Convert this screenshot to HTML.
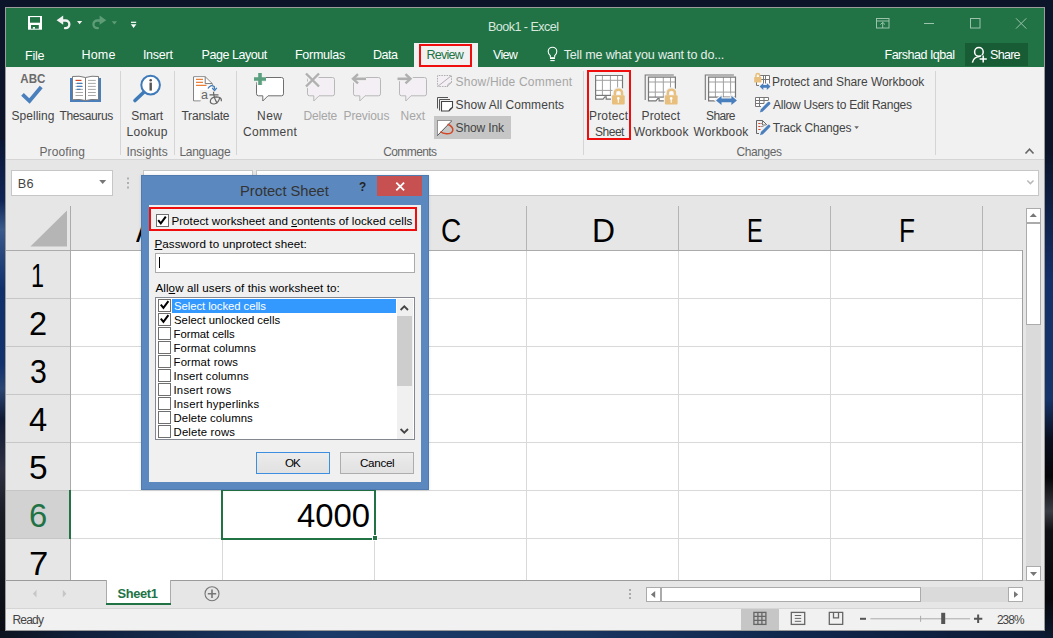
<!DOCTYPE html>
<html><head><meta charset="utf-8">
<style>
html,body{margin:0;padding:0;}
body{width:1053px;height:638px;overflow:hidden;position:relative;background:#0b1530;font-family:"Liberation Sans",sans-serif;}
.t{position:absolute;white-space:nowrap;}
.r{position:absolute;box-sizing:border-box;}
svg{position:absolute;overflow:visible;}
</style></head><body>
<div class="r" style="left:0px;top:0px;width:1053px;height:638px;background:#0b1428;"></div>
<div class="r" style="left:0px;top:140px;width:5px;height:498px;background:linear-gradient(180deg,#0b1636 0%,#0f2456 12%,#3a5a8c 18%,#2a4a80 22%,#10306c 30%,#12326e 45%,#2a4572 50%,#101a34 56%,#2e3040 66%,#1a1c26 75%,#0a0c14 100%);"></div>
<div class="r" style="left:0px;top:631px;width:1053px;height:7px;background:linear-gradient(90deg,#0d1420 0%,#10203c 8%,#1b3a68 30%,#183560 55%,#0f2448 80%,#0d1a34 100%);"></div>
<div class="r" style="left:1045px;top:150px;width:8px;height:488px;background:linear-gradient(180deg,#0b1428 0%,#14306a 27%,#16356a 51%,#0a1020 59%,#050608 67%,#3a3d44 74%,#101114 78%,#07080c 92%,#0d1a30 100%);"></div>
<div class="r" style="left:5px;top:7px;width:1040px;height:624px;background:#f1f1f1;border:1px solid #9c9c9c;"></div>
<div class="r" style="left:6px;top:8px;width:1038px;height:59px;background:#217346;"></div>
<div class="r" style="left:965px;top:43px;width:63px;height:23px;background:#185c35;"></div>
<div class="r" style="left:414px;top:43px;width:64px;height:24px;background:#f1f1f1;"></div>
<div class="r" style="left:419px;top:44px;width:53px;height:23px;border:2px solid #f00d0d;"></div>
<div class="r" style="left:6px;top:159px;width:1038px;height:1px;background:#d5d5d5;"></div>
<div class="r" style="left:6px;top:160px;width:1038px;height:420px;background:#e6e6e6;"></div>
<div class="r" style="left:11px;top:170px;width:102px;height:26px;background:#fff;border:1px solid #c6c6c6;"></div>
<div class="r" style="left:143px;top:170px;width:110px;height:26px;background:#fff;border:1px solid #c6c6c6;"></div>
<div class="r" style="left:256px;top:170px;width:783px;height:26px;background:#fff;border:1px solid #c6c6c6;"></div>
<div class="r" style="left:70px;top:250px;width:952px;height:330px;background:#fff;"></div>
<div class="r" style="left:1022px;top:250px;width:1px;height:330px;background:#a0a0a0;"></div>
<div class="r" style="left:6px;top:250px;width:1016px;height:1px;background:#ababab;"></div>
<div class="r" style="left:70px;top:206px;width:1px;height:374px;background:#ababab;"></div>
<div class="r" style="left:6px;top:580px;width:1038px;height:28px;background:#e6e6e6;border-top:1px solid #c6c6c6;"></div>
<div class="r" style="left:6px;top:608px;width:1038px;height:22px;background:#f1f1f1;border-top:1px solid #d5d5d5;"></div>
<div class="t" style="left:488.00px;top:21.00px;font-size:12.56px;line-height:12.56px;color:#d9e8de;letter-spacing:-0.533px;font-weight:400;">Book1 - Excel</div>
<div class="t" style="left:25.00px;top:50.00px;font-size:12.56px;line-height:12.56px;color:#ffffff;letter-spacing:-0.267px;font-weight:400;">File</div>
<div class="t" style="left:81.50px;top:49.00px;font-size:12.56px;line-height:12.56px;color:#ffffff;letter-spacing:0.133px;font-weight:400;">Home</div>
<div class="t" style="left:142.90px;top:49.00px;font-size:12.56px;line-height:12.56px;color:#ffffff;letter-spacing:-0.260px;font-weight:400;">Insert</div>
<div class="t" style="left:201.50px;top:49.00px;font-size:12.56px;line-height:12.56px;color:#ffffff;letter-spacing:-0.470px;font-weight:400;">Page Layout</div>
<div class="t" style="left:295.00px;top:49.00px;font-size:12.56px;line-height:12.56px;color:#ffffff;letter-spacing:-0.300px;font-weight:400;">Formulas</div>
<div class="t" style="left:373.00px;top:49.00px;font-size:12.56px;line-height:12.56px;color:#ffffff;letter-spacing:-0.533px;font-weight:400;">Data</div>
<div class="t" style="left:426.60px;top:49.00px;font-size:12.56px;line-height:12.56px;color:#217346;letter-spacing:-0.780px;font-weight:400;">Review</div>
<div class="t" style="left:493.00px;top:49.00px;font-size:12.56px;line-height:12.56px;color:#ffffff;letter-spacing:-0.700px;font-weight:400;">View</div>
<div class="t" style="left:563.70px;top:49.00px;font-size:12.56px;line-height:12.56px;color:#e6efe9;letter-spacing:-0.159px;font-weight:400;">Tell me what you want to do...</div>
<div class="t" style="left:884.50px;top:49.00px;font-size:12.56px;line-height:12.56px;color:#ffffff;letter-spacing:-0.517px;font-weight:400;">Farshad Iqbal</div>
<div class="t" style="left:990.10px;top:49.00px;font-size:12.56px;line-height:12.56px;color:#ffffff;letter-spacing:-0.750px;font-weight:400;">Share</div>
<svg style="left:0;top:0" width="1053" height="70">
<rect x="28" y="16" width="14" height="13.7" fill="#fff"/>
<rect x="30" y="17.1" width="10" height="5.6" fill="#217346"/>
<rect x="31" y="25" width="7.8" height="3.7" fill="#217346"/>
<rect x="32.9" y="27.1" width="2.1" height="1.6" fill="#fff"/>
<path d="M56.6 20.2 L63.2 15.6 V24.8 Z" fill="#f2f2f2"/>
<path d="M62 20.5 H65.5 A3.85 3.85 0 0 1 65.5 28.2 H65" fill="none" stroke="#f2f2f2" stroke-width="2.3" stroke-linecap="round"/>
<path d="M77 21 h5.2 l-2.6 3.2z" fill="#f2f2f2"/>
<path d="M106.2 20.2 L99.6 15.6 V24.8 Z" fill="#5e9d77"/>
<path d="M100.8 20.5 H97.3 A3.85 3.85 0 0 0 97.3 28.2 H97.8" fill="none" stroke="#5e9d77" stroke-width="2.3" stroke-linecap="round"/>
<path d="M111.8 21.2 h5.2 l-2.6 3.2z" fill="#5e9d77"/>
<path d="M131 22.3 h5.2" stroke="#fff" stroke-width="1.2"/>
<path d="M130.8 24.2 h5.6 l-2.8 3.8z" fill="#fff"/>
<g fill="none" stroke="#9cc3ac" stroke-width="1">
<rect x="876.5" y="18.5" width="12.5" height="9.5"/>
<path d="M876.5 21 h12.5"/>
<path d="M882.7 28 v-5.5 M880.4 24.6 l2.3 -2.3 l2.3 2.3"/>
<path d="M924 23.5 h10"/>
<rect x="970.5" y="18.5" width="9.5" height="9.5"/>
<path d="M1016 18.3 l10.3 10.3 M1026.3 18.3 l-10.3 10.3"/>
</g>
<g fill="none" stroke="#fff" stroke-width="1.5">
<circle cx="978.9" cy="51.9" r="4.3"/>
<path d="M972.4 62.6 c0.8 -3.8 4 -6 8.2 -6"/>
</g>
<path d="M983.2 55.2 v7.6 M979.4 59 h7.6" stroke="#185c35" stroke-width="4"/>
<path d="M983.2 55.4 v7.2 M979.6 59 h7.2" stroke="#fff" stroke-width="1.5"/>
<path d="M550.3 57.3 V55.6 Q548.2 53.8 548.2 51.5 A4.3 4.3 0 0 1 556.8 51.5 Q556.8 53.8 554.7 55.6 V57.3" fill="none" stroke="#fff" stroke-width="1.1"/>
<rect x="550" y="57.2" width="5" height="1.8" fill="#fff"/>
<path d="M550.3 60.6 h4.4" stroke="#fff" stroke-width="1.1"/>
</svg>
<div class="t" style="left:11.50px;top:110.00px;font-size:12.00px;line-height:12.00px;color:#444444;letter-spacing:0.029px;font-weight:400;">Spelling</div>
<div class="t" style="left:59.60px;top:110.00px;font-size:12.00px;line-height:12.00px;color:#444444;letter-spacing:-0.387px;font-weight:400;">Thesaurus</div>
<div class="t" style="left:131.30px;top:110.00px;font-size:12.00px;line-height:12.00px;color:#444444;letter-spacing:-0.075px;font-weight:400;">Smart</div>
<div class="t" style="left:126.50px;top:126.00px;font-size:12.00px;line-height:12.00px;color:#444444;letter-spacing:0.320px;font-weight:400;">Lookup</div>
<div class="t" style="left:181.40px;top:110.00px;font-size:12.00px;line-height:12.00px;color:#444444;letter-spacing:-0.188px;font-weight:400;">Translate</div>
<div class="t" style="left:257.00px;top:110.00px;font-size:12.00px;line-height:12.00px;color:#444444;letter-spacing:0.500px;font-weight:400;">New</div>
<div class="t" style="left:243.10px;top:126.00px;font-size:12.00px;line-height:12.00px;color:#444444;letter-spacing:0.267px;font-weight:400;">Comment</div>
<div class="t" style="left:303.50px;top:110.00px;font-size:12.00px;line-height:12.00px;color:#a6a6a6;letter-spacing:-0.200px;font-weight:400;">Delete</div>
<div class="t" style="left:343.50px;top:110.00px;font-size:12.00px;line-height:12.00px;color:#a6a6a6;letter-spacing:-0.114px;font-weight:400;">Previous</div>
<div class="t" style="left:400.60px;top:110.00px;font-size:12.00px;line-height:12.00px;color:#a6a6a6;letter-spacing:-0.067px;font-weight:400;">Next</div>
<div class="t" style="left:455.60px;top:76.00px;font-size:12.00px;line-height:12.00px;color:#a6a6a6;letter-spacing:0.200px;font-weight:400;">Show/Hide Comment</div>
<div class="t" style="left:455.60px;top:99.00px;font-size:12.00px;line-height:12.00px;color:#444444;letter-spacing:0.069px;font-weight:400;">Show All Comments</div>
<div class="r" style="left:434px;top:116px;width:77px;height:23px;background:#c6c6c6;"></div>
<div class="t" style="left:455.60px;top:122.00px;font-size:12.00px;line-height:12.00px;color:#444444;letter-spacing:-0.143px;font-weight:400;">Show Ink</div>
<div class="t" style="left:589.00px;top:110.00px;font-size:12.00px;line-height:12.00px;color:#444444;letter-spacing:0.167px;font-weight:400;">Protect</div>
<div class="t" style="left:594.90px;top:126.00px;font-size:12.00px;line-height:12.00px;color:#444444;letter-spacing:-0.450px;font-weight:400;">Sheet</div>
<div class="t" style="left:641.60px;top:110.00px;font-size:12.00px;line-height:12.00px;color:#444444;letter-spacing:0.067px;font-weight:400;">Protect</div>
<div class="t" style="left:633.70px;top:126.00px;font-size:12.00px;line-height:12.00px;color:#444444;letter-spacing:0.129px;font-weight:400;">Workbook</div>
<div class="t" style="left:706.00px;top:110.00px;font-size:12.00px;line-height:12.00px;color:#444444;letter-spacing:-0.625px;font-weight:400;">Share</div>
<div class="t" style="left:693.50px;top:126.00px;font-size:12.00px;line-height:12.00px;color:#444444;letter-spacing:0.129px;font-weight:400;">Workbook</div>
<div class="t" style="left:772.00px;top:76.00px;font-size:12.00px;line-height:12.00px;color:#444444;letter-spacing:-0.064px;font-weight:400;">Protect and Share Workbook</div>
<div class="t" style="left:773.00px;top:99.00px;font-size:12.00px;line-height:12.00px;color:#444444;letter-spacing:-0.256px;font-weight:400;">Allow Users to Edit Ranges</div>
<div class="t" style="left:772.80px;top:122.00px;font-size:12.00px;line-height:12.00px;color:#444444;letter-spacing:-0.192px;font-weight:400;">Track Changes</div>
<div class="t" style="left:39.50px;top:146.00px;font-size:11.98px;line-height:11.98px;color:#666666;letter-spacing:0.129px;font-weight:400;">Proofing</div>
<div class="t" style="left:126.40px;top:146.00px;font-size:11.98px;line-height:11.98px;color:#666666;letter-spacing:0.000px;font-weight:400;">Insights</div>
<div class="t" style="left:179.40px;top:146.00px;font-size:11.98px;line-height:11.98px;color:#666666;letter-spacing:-0.286px;font-weight:400;">Language</div>
<div class="t" style="left:383.20px;top:146.00px;font-size:11.98px;line-height:11.98px;color:#666666;letter-spacing:-0.571px;font-weight:400;">Comments</div>
<div class="t" style="left:736.40px;top:146.00px;font-size:11.98px;line-height:11.98px;color:#666666;letter-spacing:-0.383px;font-weight:400;">Changes</div>
<div class="r" style="left:120px;top:71px;width:1px;height:84px;background:#d5d5d5;"></div>
<div class="r" style="left:174px;top:71px;width:1px;height:84px;background:#d5d5d5;"></div>
<div class="r" style="left:236px;top:71px;width:1px;height:84px;background:#d5d5d5;"></div>
<div class="r" style="left:583px;top:71px;width:1px;height:84px;background:#d5d5d5;"></div>
<div class="r" style="left:935px;top:71px;width:1px;height:84px;background:#d5d5d5;"></div>
<div class="r" style="left:587px;top:70px;width:44px;height:70px;border:2px solid #f00d0d;"></div>
<svg style="left:0;top:0" width="1053" height="160">
<text x="20.3" y="82.8" font-family="Liberation Sans" font-weight="700" font-size="12.6" fill="#6a6a6a" textLength="25" lengthAdjust="spacingAndGlyphs">ABC</text>
<path d="M22.5 94.3 L29.5 101 L41.2 87" fill="none" stroke="#4a7fbd" stroke-width="3.8" stroke-linecap="butt"/>
<rect x="70" y="78" width="31" height="24" fill="#4a7fbd"/>
<path d="M72.5 76.5 Q79 75.5 85.5 77.5 Q92 75.5 98.5 76.5 V99.8 Q92 98.8 85.5 100.5 Q79 98.8 72.5 99.8 Z" fill="#fff" stroke="#7a7a7a" stroke-width="1"/>
<path d="M85.5 77.5 V100.5" stroke="#7a7a7a" stroke-width="1"/>
<g stroke="#a8a8a8" stroke-width="1">
<path d="M75.5 83.4h7.5M75.5 86.4h7.5M75.5 89.4h7.5M75.5 92.5h7.5M75.5 95.5h7.5"/>
<path d="M88 80.4h7.8M88 83.4h7.8M88 86.4h7.8M88 89.4h7.8M88 92.5h7.8M88 95.5h7.8"/>
</g>
<path d="M75.5 80.4h6" stroke="#d24726" stroke-width="1.2"/>
<path d="M77 83.4h5M77 86.4h5M77 89.4h3.5" stroke="#4a7fbd" stroke-width="1.2"/>
<circle cx="150.6" cy="85.1" r="9.3" fill="#fff" stroke="#3f7ab9" stroke-width="2"/>
<path d="M135 100.5 L143.8 92.2" stroke="#3f7ab9" stroke-width="3.6" stroke-linecap="round"/>
<circle cx="150.7" cy="80.2" r="1.3" fill="#555"/>
<rect x="149.5" y="82.6" width="2.4" height="8" fill="#555"/>
<path d="M193.6 76.8 H205.2 L212.2 83.6 V85 M193.6 76.8 V100.8 H200.5" fill="#fff" stroke="#777" stroke-width="1"/>
<path d="M194.1 77.3 H205 L211.7 83.8 V90 H200 V100.3 H194.1 Z" fill="#fff"/>
<path d="M205.2 76.8 V83.6 H212.2" fill="none" stroke="#777" stroke-width="1"/>
<path d="M196 79.4h7M196 82.4h7M196 85.4h10.5" stroke="#e8803a" stroke-width="1.2"/>
<path d="M208 88.5 Q210.5 84.2 214.2 86.5 L214.6 89.5" fill="none" stroke="#3f7ab9" stroke-width="1.3"/>
<path d="M212.2 88 l2.4 2.6 l2.2 -2.8" fill="none" stroke="#3f7ab9" stroke-width="1.2"/>
<text x="201" y="98.8" font-family="Liberation Sans" font-size="12.5" fill="#666">a</text>
<path d="M209.5 94.8 h9 M213.5 91.8 q0.2 6.5 3.8 11.5 M219.8 97.2 q-1.2 6.3 -5.5 6.8 q-4.2 0.2 -4 -3 q0.6 -4.2 6.5 -4.2 q5 0.2 4.6 4.5" fill="none" stroke="#666" stroke-width="1.2"/>
<!-- New comment -->
<path d="M258.5 77.5 H281.5 Q283.5 77.5 283.5 79.5 V93.8 Q283.5 95.8 281.5 95.8 H268 L262.8 101 V95.8 H258.5 Q256.5 95.8 256.5 93.8 V79.5 Q256.5 77.5 258.5 77.5 Z" fill="#fff" stroke="#6f6f6f" stroke-width="1"/>
<path d="M260 73 V85 M254 79 H266" stroke="#f1f1f1" stroke-width="6.5"/><path d="M260 73 V85 M254 79 H266" stroke="#5aa07f" stroke-width="3.6"/>
<!-- Delete -->
<path d="M309.5 77.5 H332.5 Q334.5 77.5 334.5 79.5 V93.8 Q334.5 95.8 332.5 95.8 H319 L313.8 101 V95.8 H309.5 Q307.5 95.8 307.5 93.8 V79.5 Q307.5 77.5 309.5 77.5 Z" fill="#f4eff5" stroke="#b8b8b8" stroke-width="1"/>
<path d="M306 73.5 L319 86.5 M319 73.5 L306 86.5" stroke="#f1f1f1" stroke-width="5"/><path d="M306 73.5 L319 86.5 M319 73.5 L306 86.5" stroke="#b0b0b0" stroke-width="2.4"/>
<!-- Previous -->
<path d="M355.5 77.5 H378.5 Q380.5 77.5 380.5 79.5 V93.8 Q380.5 95.8 378.5 95.8 H365 L359.8 101 V95.8 H355.5 Q353.5 95.8 353.5 93.8 V79.5 Q353.5 77.5 355.5 77.5 Z" fill="#f4eff5" stroke="#b8b8b8" stroke-width="1"/>
<path d="M353.5 78.8 H366 M358 74.2 L353 78.8 L358 83.4" fill="none" stroke="#f1f1f1" stroke-width="5"/><path d="M353.5 78.8 H366" stroke="#b0b0b0" stroke-width="2.6"/>
<path d="M358 74.2 L353 78.8 L358 83.4" fill="none" stroke="#b0b0b0" stroke-width="2.4"/>
<!-- Next -->
<path d="M401.5 77.5 H424.5 Q426.5 77.5 426.5 79.5 V93.8 Q426.5 95.8 424.5 95.8 H411 L405.8 101 V95.8 H401.5 Q399.5 95.8 399.5 93.8 V79.5 Q399.5 77.5 401.5 77.5 Z" fill="#f4eff5" stroke="#b8b8b8" stroke-width="1"/>
<path d="M397.5 78.8 H410 M405.5 74.2 L410.5 78.8 L405.5 83.4" fill="none" stroke="#f1f1f1" stroke-width="5"/><path d="M397.5 78.8 H410" stroke="#b0b0b0" stroke-width="2.6"/>
<path d="M405.5 74.2 L410.5 78.8 L405.5 83.4" fill="none" stroke="#b0b0b0" stroke-width="2.4"/>
<!-- show/hide comment -->
<path d="M437.5 75.5 H451.5 V82.5 L447 87 H437.5 Z" fill="#f4eff5"/>
<path d="M451.5 82.5 V75.5 H437.5 V86.5 H447" fill="none" stroke="#b0b0b0" stroke-width="1" stroke-dasharray="1.6 1"/>
<path d="M447 87 Q447.5 83 451.5 82.5 Q448.5 84.5 447 87 Z" fill="#fff" stroke="#b0b0b0" stroke-width="0.9"/>
<path d="M438 86.2 L451 76" stroke="#b0b0b0" stroke-width="1"/>
<!-- show all comments -->
<path d="M437.5 108.5 V97.5 H448 M439.5 110.5 V99.5 H450" fill="none" stroke="#555" stroke-width="1"/>
<path d="M441.5 101.5 H452.5 V107.5 L449 111 H441.5 Z" fill="#fff" stroke="#444" stroke-width="1.1"/>
<path d="M449 111 Q449.3 108 452.5 107.5" fill="none" stroke="#444" stroke-width="0.9"/>
<!-- show ink -->
<path d="M437.5 135.5 V120.5 H452 Z" fill="#fff"/>
<path d="M437.5 135.5 V120.5 H452" fill="none" stroke="#444" stroke-width="1" stroke-dasharray="1 1"/>
<path d="M437.6 135.4 L451.6 121" stroke="#555" stroke-width="1"/>
<path d="M447.6 124.2 Q453.2 126.5 452.8 130.3 Q452 134 446.5 133.8 Q442.5 133.6 440.6 131.6" fill="none" stroke="#d24726" stroke-width="1.5"/>
<!-- protect sheet -->
<g transform="translate(0 0)"><rect x="595.6" y="75.5" width="27" height="23.5" fill="#fff"/>
<path d="M595.6 80.3 H622.5 M595.6 90.4 H612.5 M602.4 75.5 V95.4 M610.4 75.5 V95.4 M617.6 75.5 V88.5" fill="none" stroke="#a0a0a0" stroke-width="1"/>
<path d="M595.6 95.4 V75.5 H622.5 V88.5" fill="none" stroke="#777" stroke-width="1.2"/>
<path d="M595.6 95.4 H611" fill="none" stroke="#777" stroke-width="1.2"/>
<path d="M595.6 95.4 V99.2 H603 L605 96.8 H606.2 V99.2 H611" fill="none" stroke="#777" stroke-width="1.2"/>
</g><g transform="translate(0 0)"><path d="M614.9 95.5 V93 Q614.9 89.6 618.5 89.6 Q622.1 89.6 622.1 93 V95.5" fill="none" stroke="#f1f1f1" stroke-width="4.5"/>
<rect x="611" y="94.2" width="14.7" height="11.3" rx="1.5" fill="#f1f1f1"/>
<path d="M614.9 95.5 V93 Q614.9 89.6 618.5 89.6 Q622.1 89.6 622.1 93 V95.5" fill="none" stroke="#e8bf7c" stroke-width="2.3"/>
<rect x="612" y="95.2" width="12.7" height="9.3" rx="1" fill="#e8bf7c"/>
<circle cx="618.3" cy="98.4" r="1.3" fill="#fff"/>
<path d="M618.3 98.4 V102.8" stroke="#fff" stroke-width="1.1"/>
</g>
<!-- protect workbook -->
<path d="M645.2 99.9 V75 H673.8" fill="none" stroke="#777" stroke-width="1.1"/><g transform="translate(52.9 1.7)"><rect x="595.6" y="75.5" width="27" height="23.5" fill="#fff"/>
<path d="M595.6 80.3 H622.5 M595.6 90.4 H612.5 M602.4 75.5 V95.4 M610.4 75.5 V95.4 M617.6 75.5 V88.5" fill="none" stroke="#a0a0a0" stroke-width="1"/>
<path d="M595.6 95.4 V75.5 H622.5 V88.5" fill="none" stroke="#777" stroke-width="1.2"/>
<path d="M595.6 95.4 H611" fill="none" stroke="#777" stroke-width="1.2"/>
<path d="M595.6 95.4 V99.2 H603 L605 96.8 H606.2 V99.2 H611" fill="none" stroke="#777" stroke-width="1.2"/>
</g><g transform="translate(52.9 0)"><path d="M614.9 95.5 V93 Q614.9 89.6 618.5 89.6 Q622.1 89.6 622.1 93 V95.5" fill="none" stroke="#f1f1f1" stroke-width="4.5"/>
<rect x="611" y="94.2" width="14.7" height="11.3" rx="1.5" fill="#f1f1f1"/>
<path d="M614.9 95.5 V93 Q614.9 89.6 618.5 89.6 Q622.1 89.6 622.1 93 V95.5" fill="none" stroke="#e8bf7c" stroke-width="2.3"/>
<rect x="612" y="95.2" width="12.7" height="9.3" rx="1" fill="#e8bf7c"/>
<circle cx="618.3" cy="98.4" r="1.3" fill="#fff"/>
<path d="M618.3 98.4 V102.8" stroke="#fff" stroke-width="1.1"/>
</g>
<!-- share workbook -->
<path d="M705.3000000000001 99.9 V75 H733.9" fill="none" stroke="#777" stroke-width="1.1"/>
<g transform="translate(113 1.7)">
<rect x="595.6" y="75.5" width="27" height="23.5" fill="#fff"/>
<path d="M595.6 80.3 H622.5 M595.6 90.4 H622.5 M602.4 75.5 V95.4 M610.4 75.5 V95.4 M617.6 75.5 V95.4" fill="none" stroke="#a0a0a0" stroke-width="1"/>
<path d="M595.6 95.4 V75.5 H622.5 V99.2 H611 M595.6 95.4 H622.5" fill="none" stroke="#777" stroke-width="1.2"/>
<path d="M595.6 95.4 V99.2 H603 L605 96.8 H606.2 V99.2 H611" fill="none" stroke="#777" stroke-width="1.2"/>
</g>
<path d="M716 100.4 L721.5 95.7 V98.6 H731.4 V95.7 L736.9 100.4 L731.4 105.1 V102.2 H721.5 V105.1 Z" fill="#f1f1f1" stroke="#f1f1f1" stroke-width="2.5"/>
<path d="M716 100.4 L721.5 95.7 V98.6 H731.4 V95.7 L736.9 100.4 L731.4 105.1 V102.2 H721.5 V105.1 Z" fill="#4a7fbd"/>
<!-- small change icons -->
<rect x="757" y="75.5" width="13" height="8.5" fill="#fff"/>
<g fill="none" stroke="#777" stroke-width="1">
<path d="M759 75.5 H769.5 V83.5 M759 79.5 H769.5 M763.5 75.5 V83.5 M765.5 75.5 V83.5 M756.5 81 V85.5 H759"/>
</g>
<path d="M755.9 77.5 V76 Q755.9 73.4 757.8 73.4 Q759.7 73.4 759.7 76 V77.5" fill="none" stroke="#e8bf7c" stroke-width="1.5"/>
<rect x="754.2" y="77" width="7.2" height="5.5" rx="0.6" fill="#e8bf7c"/>
<path d="M759.6 86.4 L763.3 82.9 V85 H766.8 V82.9 L770.5 86.4 L766.8 89.9 V87.8 H763.3 V89.9 Z" fill="#4a7fbd"/>
<rect x="755.5" y="97.5" width="13" height="9" fill="#fff"/>
<g fill="none" stroke="#777" stroke-width="1">
<path d="M755.5 106.5 V97.5 H768.5 V101 M755.5 100.5 H768.5 M755.5 103.5 H764 M755.5 106.5 H761 M759.5 97.5 V106.5 M764 97.5 V103.5"/>
</g>
<path d="M762.2 110 L769.2 103" stroke="#f1f1f1" stroke-width="5" stroke-linecap="round"/>
<path d="M762.2 110 L768.8 103.4" stroke="#4a7fbd" stroke-width="3" stroke-linecap="round"/>
<path d="M759.8 112.6 L761 109.3 L763 111.3 Z" fill="#4a7fbd"/>
<path d="M756.5 133.5 V120.5 H762.5 L767 125 V127" fill="none" stroke="#666" stroke-width="1"/>
<path d="M762.5 120.5 V125 H767" fill="none" stroke="#666" stroke-width="0.9"/>
<path d="M756.5 133.5 H759" fill="none" stroke="#666" stroke-width="1"/>
<path d="M758.3 123.5h2.2M758.3 126.5h2.2M758.3 129.5h2.2" stroke="#d24726" stroke-width="1.1"/>
<path d="M761 123.5h1.5M761 126.5h2.5" stroke="#999" stroke-width="1"/>
<path d="M762.4 132.6 L769.2 125.8" stroke="#f1f1f1" stroke-width="5" stroke-linecap="round"/>
<path d="M762.4 132.6 L768.8 126.2" stroke="#4a7fbd" stroke-width="3" stroke-linecap="round"/>
<path d="M759.9 135.2 L761.1 131.9 L763.1 133.9 Z" fill="#4a7fbd"/>
<path d="M854.3 126.2 h4.6 l-2.3 2.8z" fill="#666"/>
<path d="M1025.5 153.5 L1029.5 149.2 L1033.5 153.5" fill="none" stroke="#666" stroke-width="1.6"/>
</svg>
<div class="t" style="left:17.70px;top:178.00px;font-size:12.70px;line-height:12.70px;color:#444;letter-spacing:0.300px;font-weight:400;">B6</div>
<svg style="left:0;top:0" width="1053" height="260">
<path d="M99.2 180 h7 l-3.5 4z" fill="#777"/>
<rect x="127" y="177.5" width="2" height="2" fill="#b0b0b0"/>
<rect x="127" y="182" width="2" height="2" fill="#b0b0b0"/>
<rect x="127" y="186.5" width="2" height="2" fill="#b0b0b0"/>
<path d="M1027.3 180.5 l3.1 3.1 l3.1 -3.1" fill="none" stroke="#b8b8b8" stroke-width="1.5"/>
<path d="M30.4 246.4 H67 V210.4 Z" fill="#b5b5b5"/>
</svg>
<div class="r" style="left:71px;top:298px;width:951px;height:1px;background:#d9d9d9;"></div>
<div class="r" style="left:6px;top:298px;width:64px;height:1px;background:#c6c6c6;"></div>
<div class="r" style="left:71px;top:346px;width:951px;height:1px;background:#d9d9d9;"></div>
<div class="r" style="left:6px;top:346px;width:64px;height:1px;background:#c6c6c6;"></div>
<div class="r" style="left:71px;top:394px;width:951px;height:1px;background:#d9d9d9;"></div>
<div class="r" style="left:6px;top:394px;width:64px;height:1px;background:#c6c6c6;"></div>
<div class="r" style="left:71px;top:442px;width:951px;height:1px;background:#d9d9d9;"></div>
<div class="r" style="left:6px;top:442px;width:64px;height:1px;background:#c6c6c6;"></div>
<div class="r" style="left:71px;top:490px;width:951px;height:1px;background:#d9d9d9;"></div>
<div class="r" style="left:6px;top:490px;width:64px;height:1px;background:#c6c6c6;"></div>
<div class="r" style="left:71px;top:538px;width:951px;height:1px;background:#d9d9d9;"></div>
<div class="r" style="left:6px;top:538px;width:64px;height:1px;background:#c6c6c6;"></div>
<div class="r" style="left:222px;top:251px;width:1px;height:329px;background:#d9d9d9;"></div>
<div class="r" style="left:222px;top:206px;width:1px;height:44px;background:#b4b4b4;"></div>
<div class="r" style="left:374px;top:251px;width:1px;height:329px;background:#d9d9d9;"></div>
<div class="r" style="left:374px;top:206px;width:1px;height:44px;background:#b4b4b4;"></div>
<div class="r" style="left:526px;top:251px;width:1px;height:329px;background:#d9d9d9;"></div>
<div class="r" style="left:526px;top:206px;width:1px;height:44px;background:#b4b4b4;"></div>
<div class="r" style="left:678px;top:251px;width:1px;height:329px;background:#d9d9d9;"></div>
<div class="r" style="left:678px;top:206px;width:1px;height:44px;background:#b4b4b4;"></div>
<div class="r" style="left:830px;top:251px;width:1px;height:329px;background:#d9d9d9;"></div>
<div class="r" style="left:830px;top:206px;width:1px;height:44px;background:#b4b4b4;"></div>
<div class="r" style="left:982px;top:206px;width:1px;height:44px;background:#b4b4b4;"></div>
<div class="r" style="left:982px;top:251px;width:1px;height:329px;background:#d9d9d9;"></div>
<div class="r" style="left:6px;top:580px;width:1017px;height:1px;background:#9b9b9b;"></div>
<div class="r" style="left:6px;top:491px;width:64px;height:47px;background:#d2d2d2;"></div>
<div class="t" style="left:30.90px;top:259.00px;font-size:33.87px;line-height:33.87px;color:#000;letter-spacing:0.000px;font-weight:400;transform:scaleX(0.6918);transform-origin:0 0;">1</div>
<div class="t" style="left:29.47px;top:307.00px;font-size:33.87px;line-height:33.87px;color:#000;letter-spacing:0.000px;font-weight:400;transform:scaleX(0.9613);transform-origin:0 0;">2</div>
<div class="t" style="left:30.14px;top:355.00px;font-size:33.87px;line-height:33.87px;color:#000;letter-spacing:0.000px;font-weight:400;transform:scaleX(0.8944);transform-origin:0 0;">3</div>
<div class="t" style="left:28.83px;top:403.00px;font-size:33.87px;line-height:33.87px;color:#000;letter-spacing:0.000px;font-weight:400;transform:scaleX(0.9649);transform-origin:0 0;">4</div>
<div class="t" style="left:29.02px;top:451.00px;font-size:33.87px;line-height:33.87px;color:#000;letter-spacing:0.000px;font-weight:400;transform:scaleX(0.9876);transform-origin:0 0;">5</div>
<div class="t" style="left:29.45px;top:499.00px;font-size:33.87px;line-height:33.87px;color:#217346;letter-spacing:0.000px;font-weight:400;transform:scaleX(0.9682);transform-origin:0 0;">6</div>
<div class="t" style="left:28.66px;top:547.00px;font-size:33.87px;line-height:33.87px;color:#000;letter-spacing:0.000px;font-weight:400;transform:scaleX(1.0258);transform-origin:0 0;">7</div>
<div class="t" style="left:136.22px;top:214.00px;font-size:33.72px;line-height:33.72px;color:#000;letter-spacing:0.000px;font-weight:400;transform:scaleX(0.8296);transform-origin:0 0;">A</div>
<div class="t" style="left:287.60px;top:214.00px;font-size:33.72px;line-height:33.72px;color:#000;letter-spacing:0.000px;font-weight:400;transform:scaleX(0.8889);transform-origin:0 0;">B</div>
<div class="t" style="left:440.89px;top:214.00px;font-size:33.72px;line-height:33.72px;color:#000;letter-spacing:0.000px;font-weight:400;transform:scaleX(0.8310);transform-origin:0 0;">C</div>
<div class="t" style="left:591.75px;top:214.00px;font-size:33.72px;line-height:33.72px;color:#000;letter-spacing:0.000px;font-weight:400;transform:scaleX(0.9453);transform-origin:0 0;">D</div>
<div class="t" style="left:747.11px;top:214.00px;font-size:33.72px;line-height:33.72px;color:#000;letter-spacing:0.000px;font-weight:400;transform:scaleX(0.7011);transform-origin:0 0;">E</div>
<div class="t" style="left:898.90px;top:214.00px;font-size:33.72px;line-height:33.72px;color:#000;letter-spacing:0.000px;font-weight:400;transform:scaleX(0.7771);transform-origin:0 0;">F</div>
<div class="r" style="left:221px;top:489px;width:155px;height:51px;border:2px solid #217346;"></div>
<div class="r" style="left:372px;top:535px;width:6px;height:6px;background:#217346;border:1px solid #fff;"></div>
<div class="r" style="left:69px;top:490px;width:2px;height:49px;background:#217346;"></div>
<div class="t" style="left:296.91px;top:499.00px;font-size:33.14px;line-height:33.14px;color:#000;letter-spacing:0.000px;font-weight:400;transform:scaleX(0.9916);transform-origin:0 0;">4000</div>
<div class="r" style="left:1026px;top:208px;width:15px;height:372px;background:#dadada;"></div>
<div class="r" style="left:1026px;top:208px;width:15px;height:15px;background:#fff;border:1px solid #ababab;"></div>
<div class="r" style="left:1026px;top:223px;width:15px;height:102px;background:#fff;border:1px solid #ababab;"></div>
<div class="r" style="left:1026px;top:566px;width:15px;height:15px;background:#fff;border:1px solid #ababab;"></div>
<div class="r" style="left:646px;top:587px;width:377px;height:15px;background:#dadada;"></div>
<div class="r" style="left:646px;top:587px;width:15px;height:15px;background:#fff;border:1px solid #ababab;"></div>
<div class="r" style="left:661px;top:587px;width:260px;height:15px;background:#fff;border:1px solid #ababab;"></div>
<div class="r" style="left:1008px;top:587px;width:15px;height:15px;background:#fff;border:1px solid #ababab;"></div>
<svg style="left:0;top:0" width="1053" height="638">
<path d="M1029.7 216.9 h7.2 l-3.6 -3.6z" fill="#777"/>
<path d="M1030 572.1 h7.1 l-3.55 4z" fill="#777"/>
<path d="M655.2 590.9 v7 l-4.3 -3.5z" fill="#777"/>
<path d="M1014 591.3 v6.4 l4.2 -3.2z" fill="#777"/>
<rect x="629" y="589" width="2" height="2" fill="#aaa"/>
<rect x="629" y="593" width="2" height="2" fill="#aaa"/>
<rect x="629" y="597" width="2" height="2" fill="#aaa"/>
<path d="M36.5 589.8 l-3.6 3.9 l3.6 3.9z" fill="#c6c6c6"/>
<path d="M62.8 589.8 l3.6 3.9 l-3.6 3.9z" fill="#c6c6c6"/>
<circle cx="212" cy="593.7" r="7" fill="none" stroke="#777" stroke-width="1.1"/>
<path d="M212 589.5 v8.4 M207.8 593.7 h8.4" stroke="#777" stroke-width="1.6"/>
</svg>
<div class="r" style="left:106px;top:580px;width:65px;height:25px;background:#fff;border-left:1px solid #ababab;border-right:1px solid #ababab;"></div>
<div class="r" style="left:106px;top:603px;width:65px;height:2px;background:#217346;"></div>
<div class="t" style="left:117.60px;top:588.00px;font-size:12.84px;line-height:12.84px;color:#217346;letter-spacing:-0.360px;font-weight:700;">Sheet1</div>
<div class="t" style="left:12.40px;top:614.00px;font-size:12.00px;line-height:12.00px;color:#444;letter-spacing:-0.775px;font-weight:400;">Ready</div>
<div class="r" style="left:741px;top:609px;width:38px;height:21px;background:#c6c6c6;"></div>
<svg style="left:0;top:0" width="1053" height="638">
<g fill="none" stroke="#666" stroke-width="1.3">
<rect x="753.9" y="612.4" width="12" height="12"/>
<path d="M757.9 612.4 v12 M761.9 612.4 v12 M753.9 616.4 h12 M753.9 620.4 h12"/>
<rect x="791.3" y="612.4" width="13.4" height="12"/>
<path d="M794.8 615.5 h6.4 M794.8 618.4 h6.4 M794.8 621.3 h6.4" stroke-width="1"/>
<path d="M829.3 612.4 h13.4 v12 h-13.4 z M833.5 612.4 v5.5 h5 v-5.5"/>
</g>
<path d="M860 618.8 h6" stroke="#555" stroke-width="2"/>
<path d="M870.4 618.8 h99.6" stroke="#aaa" stroke-width="1"/>
<path d="M920.6 615.8 v6" stroke="#aaa" stroke-width="1"/>
<rect x="941.2" y="612.8" width="4" height="11.2" fill="#555"/>
<path d="M974 618.8 h8.3 M978.15 614.6 v8.3" stroke="#555" stroke-width="2"/>
</svg>
<div class="t" style="left:996.90px;top:615.00px;font-size:11.86px;line-height:11.86px;color:#444;letter-spacing:-0.933px;font-weight:400;">238%</div>
<div class="r" style="left:141px;top:175px;width:288px;height:315px;background:#5b88be;border:1px solid #4f7bb0;box-shadow:0 0 3px rgba(0,0,0,0.12);"></div>
<div class="r" style="left:149px;top:205px;width:272px;height:277px;background:#f0f0f0;"></div>
<div class="r" style="left:377px;top:176px;width:45px;height:20px;background:#c75050;"></div>
<div class="t" style="left:240.10px;top:184.00px;font-size:14.71px;line-height:14.71px;color:#333;letter-spacing:-0.033px;font-weight:400;">Protect Sheet</div>
<svg style="left:0;top:0" width="1053" height="638">
<path d="M396.3 182.6 l7.8 7.8 M404.1 182.6 l-7.8 7.8" stroke="#fff" stroke-width="1.8"/>
</svg>
<div class="t" style="left:359.48px;top:180.00px;font-size:13.52px;line-height:13.52px;color:#222;letter-spacing:0.000px;font-weight:700;transform:scaleX(0.8696);transform-origin:0 0;">?</div>
<div class="r" style="left:149px;top:207px;width:268px;height:24px;border:2px solid #f00d0d;"></div>
<div class="r" style="left:155.6px;top:214px;width:13px;height:13px;background:#fff;border:1px solid #6f6f6f;"></div>
<svg style="left:0;top:0" width="1053" height="638"><path d="M158.2 220.2 l2.6 3.2 l5 -6.8" fill="none" stroke="#000" stroke-width="2"/></svg>
<div class="t" style="left:171.40px;top:215.00px;font-size:11.63px;line-height:11.63px;color:#000;letter-spacing:0.042px;font-weight:400;">Protect worksheet and <u>c</u>ontents of locked cells</div>
<div class="t" style="left:154.50px;top:238.00px;font-size:11.63px;line-height:11.63px;color:#000;letter-spacing:0.063px;font-weight:400;"><u>P</u>assword to unprotect sheet:</div>
<div class="r" style="left:155px;top:253px;width:260px;height:20px;background:#fff;border:1px solid #ababab;"></div>
<div class="r" style="left:159px;top:257px;width:1px;height:11px;background:#000;"></div>
<div class="t" style="left:155.40px;top:282.00px;font-size:11.63px;line-height:11.63px;color:#000;letter-spacing:0.097px;font-weight:400;">All<u>o</u>w all users of this worksheet to:</div>
<div class="r" style="left:155px;top:297px;width:260px;height:143px;background:#fff;border:1px solid #828790;"></div>
<div class="r" style="left:172px;top:299px;width:224px;height:14px;background:#3399ff;"></div>
<div class="r" style="left:158.2px;top:298.5px;width:13px;height:13px;background:#fff;border:1px solid #6f6f6f;"></div>
<svg style="left:0;top:0" width="1053" height="638"><path d="M160.79999999999998 304.7 l2.6 3.2 l5 -6.8" fill="none" stroke="#000" stroke-width="2"/></svg>
<div class="t" style="left:174.00px;top:301.00px;font-size:11.34px;line-height:11.34px;color:#fff;letter-spacing:-0.067px;font-weight:400;">Select locked cells</div>
<div class="r" style="left:158.2px;top:312.5px;width:13px;height:13px;background:#fff;border:1px solid #6f6f6f;"></div>
<svg style="left:0;top:0" width="1053" height="638"><path d="M160.79999999999998 318.7 l2.6 3.2 l5 -6.8" fill="none" stroke="#000" stroke-width="2"/></svg>
<div class="t" style="left:174.00px;top:315.00px;font-size:11.34px;line-height:11.34px;color:#000;letter-spacing:0.015px;font-weight:400;">Select unlocked cells</div>
<div class="r" style="left:158.2px;top:326.5px;width:13px;height:13px;background:#fff;border:1px solid #6f6f6f;"></div>
<div class="t" style="left:173.60px;top:329.00px;font-size:11.34px;line-height:11.34px;color:#000;letter-spacing:-0.064px;font-weight:400;">Format cells</div>
<div class="r" style="left:158.2px;top:340.5px;width:13px;height:13px;background:#fff;border:1px solid #6f6f6f;"></div>
<div class="t" style="left:173.60px;top:343.00px;font-size:11.34px;line-height:11.34px;color:#000;letter-spacing:0.085px;font-weight:400;">Format columns</div>
<div class="r" style="left:158.2px;top:354.5px;width:13px;height:13px;background:#fff;border:1px solid #6f6f6f;"></div>
<div class="t" style="left:173.60px;top:357.00px;font-size:11.34px;line-height:11.34px;color:#000;letter-spacing:0.150px;font-weight:400;">Format rows</div>
<div class="r" style="left:158.2px;top:368.5px;width:13px;height:13px;background:#fff;border:1px solid #6f6f6f;"></div>
<div class="t" style="left:173.50px;top:371.00px;font-size:11.34px;line-height:11.34px;color:#000;letter-spacing:0.123px;font-weight:400;">Insert columns</div>
<div class="r" style="left:158.2px;top:382.5px;width:13px;height:13px;background:#fff;border:1px solid #6f6f6f;"></div>
<div class="t" style="left:173.50px;top:385.00px;font-size:11.34px;line-height:11.34px;color:#000;letter-spacing:0.220px;font-weight:400;">Insert rows</div>
<div class="r" style="left:158.2px;top:396.5px;width:13px;height:13px;background:#fff;border:1px solid #6f6f6f;"></div>
<div class="t" style="left:173.50px;top:399.00px;font-size:11.34px;line-height:11.34px;color:#000;letter-spacing:0.194px;font-weight:400;">Insert hyperlinks</div>
<div class="r" style="left:158.2px;top:410.5px;width:13px;height:13px;background:#fff;border:1px solid #6f6f6f;"></div>
<div class="t" style="left:173.60px;top:413.00px;font-size:11.34px;line-height:11.34px;color:#000;letter-spacing:0.085px;font-weight:400;">Delete columns</div>
<div class="r" style="left:158.2px;top:424.5px;width:13px;height:13px;background:#fff;border:1px solid #6f6f6f;"></div>
<div class="t" style="left:173.60px;top:427.00px;font-size:11.34px;line-height:11.34px;color:#000;letter-spacing:0.150px;font-weight:400;">Delete rows</div>
<div class="r" style="left:397px;top:299px;width:16px;height:140px;background:#f0f0f0;"></div>
<div class="r" style="left:397px;top:316px;width:15px;height:70px;background:#cdcdcd;"></div>
<svg style="left:0;top:0" width="1053" height="638">
<path d="M400.6 310 l3.7 -3.7 l3.7 3.7" fill="none" stroke="#444" stroke-width="1.8"/>
<path d="M400.6 429 l3.7 3.7 l3.7 -3.7" fill="none" stroke="#444" stroke-width="1.8"/>
</svg>
<div class="r" style="left:256px;top:452px;width:74px;height:22px;background:linear-gradient(#ececec,#e1e1e1);border:1px solid #3d8ee0;"></div>
<div class="r" style="left:340px;top:452px;width:74px;height:22px;background:linear-gradient(#ececec,#e1e1e1);border:1px solid #adadad;"></div>
<div class="t" style="left:285.00px;top:457.00px;font-size:11.63px;line-height:11.63px;color:#000;letter-spacing:-1.100px;font-weight:400;">OK</div>
<div class="t" style="left:360.00px;top:457.00px;font-size:11.63px;line-height:11.63px;color:#000;letter-spacing:-0.300px;font-weight:400;">Cancel</div>
</body></html>
